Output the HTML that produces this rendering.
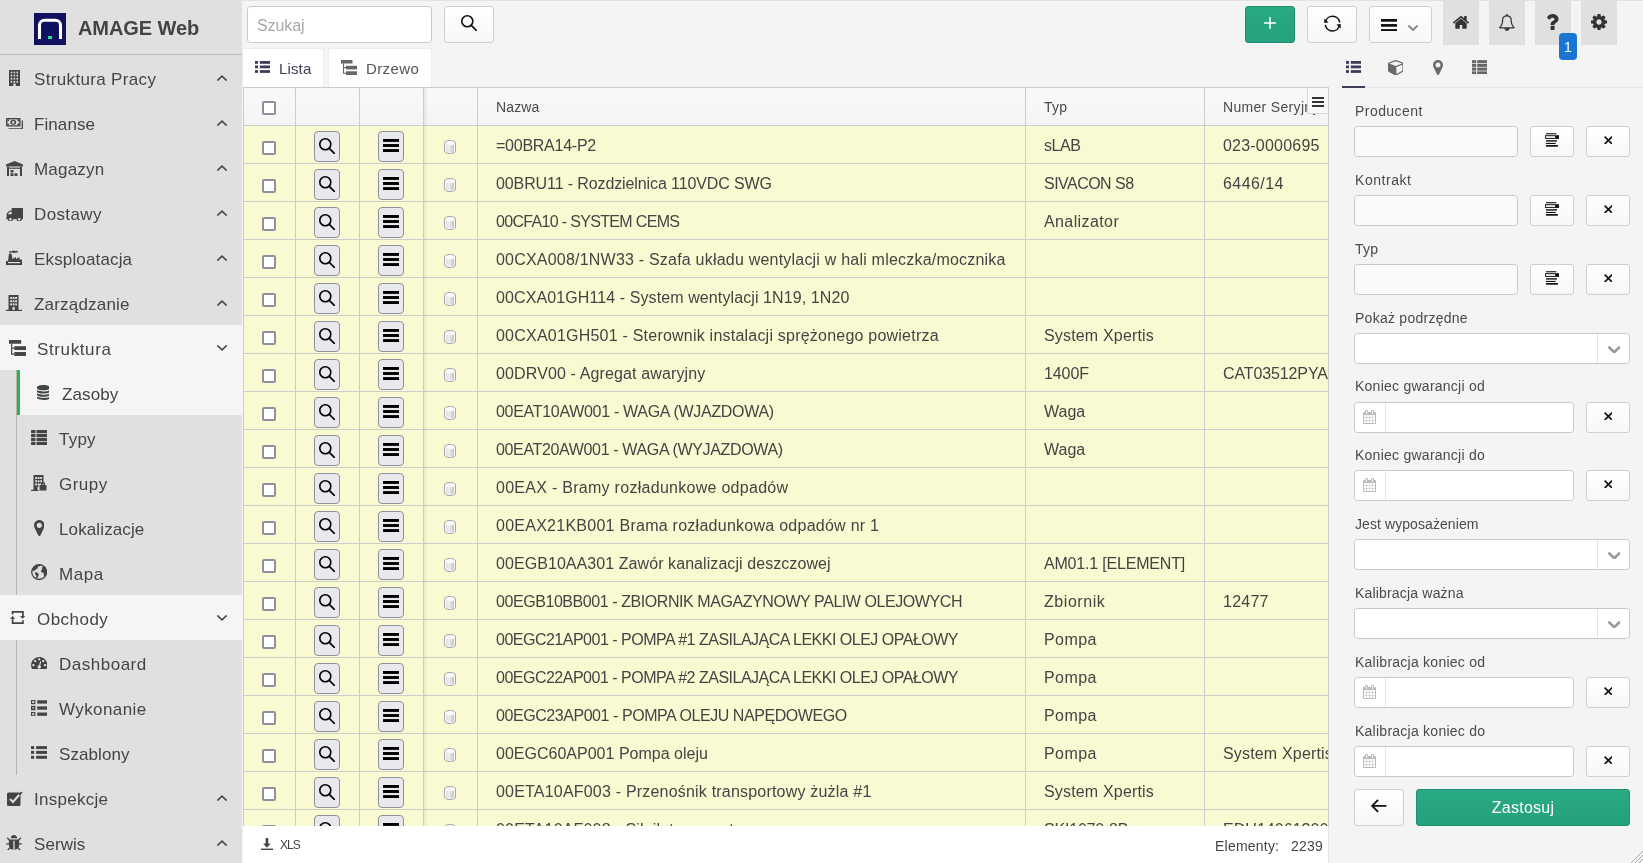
<!DOCTYPE html>
<html lang="pl"><head><meta charset="utf-8"><title>AMAGE Web</title><style>
*{box-sizing:border-box}
html,body{margin:0;padding:0}
html{background:#f4f4f4}
body{width:1643px;height:863px;overflow:hidden;will-change:transform;font-family:"Liberation Sans",sans-serif;color:#444;font-size:16px;position:relative}
.ic{display:block}
.abs{position:absolute}
#side{position:absolute;left:0;top:0;width:242px;height:863px;background:#e0e0e0}
#brand{position:absolute;left:0;top:0;width:242px;height:55px;border-bottom:1px solid #b8b8b8}
#logo{position:absolute;left:34px;top:13px;width:32px;height:32px;background:#0e1060}
#brand .t{position:absolute;left:78px;top:1.3px;height:55px;line-height:55px;font-size:20px;font-weight:700;color:#444;white-space:nowrap}
#menu{position:absolute;left:0;top:55px;width:242px}
.mi{position:relative;height:45px;width:242px}
.mi .i{position:absolute;left:4px;top:0;width:20px;height:45px;display:flex;align-items:center;justify-content:center}
.mi .l{position:absolute;left:34px;top:2px;height:45px;line-height:45px;font-size:17px;white-space:nowrap;color:#454545}
.mi .c{position:absolute;left:217px;top:19.8px}
.mi.act{background:#f5f5f5}
.mi.act .i{left:7px}
.mi.act .l{left:37px}
.sub{position:relative;margin-left:16px;border-left:1px solid #b5b5b5;width:226px}
.si{position:relative;height:45px;width:225px}
.si .i{position:absolute;left:12px;top:0;width:20px;height:45px;display:flex;align-items:center;justify-content:center}
.si .l{position:absolute;left:42px;top:2px;height:45px;line-height:45px;font-size:17px;white-space:nowrap;color:#454545}
.si.act{background:#f5f5f5;border-left:3px solid #2fb344;margin-left:0px;width:225px}
.si.act .i{left:13px}
.si.act .l{left:42px}
.btn{position:absolute;border:1px solid #cfcfcf;border-radius:3px;padding-bottom:3px;background:linear-gradient(#fff,#f7f7f7);display:flex;align-items:center;justify-content:center}
.inp{position:absolute;border:1px solid #c9c9c9;border-radius:3.5px;background:#fafafa}
.lbl{position:absolute;margin-top:1px;font-size:14px;line-height:20px;color:#4a4a4a;white-space:nowrap}
.tb{position:absolute;top:0;width:36px;height:45px;background:#e0e0e0;display:flex;align-items:center;justify-content:center}
#grid{position:absolute;left:243px;top:87px;width:1086px;height:739px;overflow:hidden;border-left:1px solid #ccc;border-right:1px solid #ccc;border-top:1px solid #ccc;background:#fafad2}
#ghead{position:absolute;left:0;top:0;width:1086px;height:38px;background:linear-gradient(#f9f9f9,#f4f4f4);border-bottom:1px solid #ccc}
.hc{position:absolute;top:1px;height:37px;line-height:37px;font-size:14px;color:#4a4a4a;white-space:nowrap;overflow:hidden}
.vl{position:absolute;top:0;width:1px;height:739px;background:#ccc}
.row{position:absolute;left:0;width:1086px;height:38px;border-bottom:1px solid #ccc}
.row .tx{position:absolute;top:1px;height:37px;line-height:37px;font-size:16px;color:#444;white-space:nowrap;overflow:hidden}
.cb{position:absolute;width:14px;height:14px;border:2px solid #8f8f9d;border-radius:2px;background:#fff}
.rb{position:absolute;top:5px;width:26px;height:31px;padding-bottom:2px;border:1px solid #8f8f9d;border-radius:4px;background:#e9e9ed;display:flex;align-items:center;justify-content:center}
#foot{position:absolute;left:243px;top:826px;width:1086px;height:37px;background:#fff;border-right:1px solid #e6e6e6}
#panel{position:absolute;left:1329px;top:87px;width:314px;height:776px}
</style></head><body>
<div id="side"><div id="brand"><div id="logo"><svg class="ic" width="32" height="32" viewBox="0 0 32 32"><path d="M5.500 26V12.300a5 5 0 0 1 5-5h11a5 5 0 0 1 5 5V26" fill="none" stroke="#fff" stroke-width="3.100"/><rect x="14" y="23" width="4" height="3" fill="#1fe0a0"/></svg></div><div class="t"><span style="letter-spacing:-0.08px">AMAGE Web</span></div></div><div id="menu"><div class="mi"><div class="i" style="padding-top:0px;padding-left:0px"><svg class="ic" width="11" height="16" viewBox="0 0 11 16"><rect x="0" y="0" width="11" height="16" fill="#444"/><g fill="#e0e0e0"><rect x="1.70" y="1.60" width="1.600" height="1.800"/><rect x="4.60" y="1.60" width="1.600" height="1.800"/><rect x="7.50" y="1.60" width="1.600" height="1.800"/><rect x="1.70" y="4.70" width="1.600" height="1.800"/><rect x="4.60" y="4.70" width="1.600" height="1.800"/><rect x="7.50" y="4.70" width="1.600" height="1.800"/><rect x="1.70" y="7.80" width="1.600" height="1.800"/><rect x="4.60" y="7.80" width="1.600" height="1.800"/><rect x="7.50" y="7.80" width="1.600" height="1.800"/><rect x="1.70" y="10.90" width="1.600" height="1.800"/><rect x="4.60" y="10.90" width="1.600" height="1.800"/><rect x="7.50" y="10.90" width="1.600" height="1.800"/><rect x="4.300" y="13.600" width="2.400" height="2.400"/></g></svg></div><div class="l"><span style="letter-spacing:0.34px">Struktura Pracy</span></div><div class="c"><svg class="ic" width="10" height="6" viewBox="0 0 10 6"><polyline points="0.3,5.6 5,1.1 9.7,5.6" fill="none" stroke="#484848" stroke-width="1.55"/></svg></div></div><div class="mi"><div class="i" style="padding-top:2px;padding-left:0px"><svg class="ic" width="17" height="11.500" viewBox="0 0 17 11.500"><rect x="0" y="0" width="14.500" height="8.600" rx=".8" fill="#444"/><rect x="1.400" y="1.400" width="11.700" height="5.800" fill="#e0e0e0"/><ellipse cx="7.250" cy="4.300" rx="2.900" ry="2.500" fill="#444"/><ellipse cx="7.250" cy="4.300" rx="1.100" ry="1.500" fill="#e0e0e0"/><path d="M1.400 1.400h2a2 2 0 0 1-2 2zM13.100 1.400h-2a2 2 0 0 0 2 2zM1.400 7.200h2a2 2 0 0 0-2-2zM13.100 7.200h-2a2 2 0 0 1 2-2z" fill="#444"/><path d="M16.300 2.500V10.800H2.500" fill="none" stroke="#444" stroke-width="1.300"/></svg></div><div class="l"><span style="letter-spacing:0.08px">Finanse</span></div><div class="c"><svg class="ic" width="10" height="6" viewBox="0 0 10 6"><polyline points="0.3,5.6 5,1.1 9.7,5.6" fill="none" stroke="#484848" stroke-width="1.55"/></svg></div></div><div class="mi"><div class="i" style="padding-top:1.0px;padding-left:0px"><svg class="ic" width="17" height="15" viewBox="0 0 17 15"><g fill="#444"><path d="M8.500 0L17 3.600V5.600H0V3.600z"/><rect x="1" y="5.600" width="2" height="9.400"/><rect x="14" y="5.600" width="2" height="9.400"/><rect x="3" y="6.600" width="11" height="1.200"/><rect x="4.500" y="9" width="3" height="2.500"/><rect x="4.500" y="12.300" width="3" height="2.700"/><rect x="8.500" y="12.300" width="3" height="2.700"/></g></svg></div><div class="l"><span style="letter-spacing:0.19px">Magazyn</span></div><div class="c"><svg class="ic" width="10" height="6" viewBox="0 0 10 6"><polyline points="0.3,5.6 5,1.1 9.7,5.6" fill="none" stroke="#484848" stroke-width="1.55"/></svg></div></div><div class="mi"><div class="i" style="padding-top:4px;padding-left:0px"><svg class="ic" width="17.00" height="13.85" viewBox="0 0 1728 1408" style=""><path fill="#444" d="M576 1152C576 1222 518 1280 448 1280C378 1280 320 1222 320 1152C320 1082 378 1024 448 1024C518 1024 576 1082 576 1152ZM192 640V610C192 606 198 591 201 588L396 393C399 390 414 384 418 384H576V640ZM1472 1152C1472 1222 1414 1280 1344 1280C1274 1280 1216 1222 1216 1152C1216 1082 1274 1024 1344 1024C1414 1024 1472 1082 1472 1152ZM1728 64C1728 29 1699 0 1664 0H640C605 0 576 29 576 64V256H416C380 256 332 276 307 301L109 499C54 554 64 633 64 704V1024C29 1024 0 1053 0 1088C0 1162 78 1152 128 1152H192C192 1293 307 1408 448 1408C589 1408 704 1293 704 1152H1088C1088 1293 1203 1408 1344 1408C1485 1408 1600 1293 1600 1152C1650 1152 1728 1162 1728 1088Z"/></svg></div><div class="l"><span style="letter-spacing:0.38px">Dostawy</span></div><div class="c"><svg class="ic" width="10" height="6" viewBox="0 0 10 6"><polyline points="0.3,5.6 5,1.1 9.7,5.6" fill="none" stroke="#484848" stroke-width="1.55"/></svg></div></div><div class="mi"><div class="i" style="padding-top:0px;padding-left:0px"><svg class="ic" width="16" height="15" viewBox="0 0 16 15"><g fill="#444"><path d="M0 15V11H2L3 3.500H5.500L6.500 9L10 7V9L13.500 7V9.500H16V15z"/><path d="M3 2.400C3 .9 4.500 .9 5.500 1.400C6.500 0 8.500 .2 9 1.200C10.500 .4 12 1 12 2.400H9.500C9 3.200 7.500 3.200 7 2.400z"/></g><rect x="2" y="12" width="12" height="1.200" fill="#e0e0e0"/></svg></div><div class="l"><span style="letter-spacing:0.15px">Eksploatacja</span></div><div class="c"><svg class="ic" width="10" height="6" viewBox="0 0 10 6"><polyline points="0.3,5.6 5,1.1 9.7,5.6" fill="none" stroke="#484848" stroke-width="1.55"/></svg></div></div><div class="mi"><div class="i" style="padding-top:0px;padding-left:0px"><svg class="ic" width="16" height="16" viewBox="0 0 16 16"><g fill="#444"><rect x="2.500" y="0" width="10" height="15"/><rect x="0" y="14.800" width="16" height="1.200"/></g><g fill="#e0e0e0"><rect x="4.200" y="2" width="1.800" height="2"/><rect x="6.700" y="2" width="1.800" height="2"/><rect x="9.200" y="2" width="1.800" height="2"/><rect x="4.200" y="5.200" width="1.800" height="2"/><rect x="6.700" y="5.200" width="1.800" height="2"/><rect x="9.200" y="5.200" width="1.800" height="2"/><rect x="4.200" y="8.400" width="1.800" height="2"/><rect x="6.700" y="8.400" width="1.800" height="2"/><rect x="9.200" y="8.400" width="1.800" height="2"/><rect x="6.500" y="12" width="2.200" height="3"/></g></svg></div><div class="l"><span style="letter-spacing:0.19px">Zarządzanie</span></div><div class="c"><svg class="ic" width="10" height="6" viewBox="0 0 10 6"><polyline points="0.3,5.6 5,1.1 9.7,5.6" fill="none" stroke="#484848" stroke-width="1.55"/></svg></div></div><div class="mi act"><div class="i" style="padding-top:0px;padding-left:0px"><svg class="ic" width="17" height="16" viewBox="0 0 16 15"><g fill="#444"><rect x="0" y="0" width="11.500" height="3.500"/><rect x="5" y="5.800" width="11" height="3.600"/><rect x="5" y="11.300" width="11" height="3.700"/></g><path d="M2.500 3.500V13.200H5M2.500 7.600H5" fill="none" stroke="#444" stroke-width="1.1"/></svg></div><div class="l"><span style="letter-spacing:0.62px">Struktura</span></div><div class="c"><svg class="ic" width="10" height="6" viewBox="0 0 10 6"><polyline points="0.3,0.4 5,4.9 9.7,0.4" fill="none" stroke="#484848" stroke-width="1.55"/></svg></div></div><div class="sub"><div class="si act"><div class="i" style="padding-top:0px;padding-left:0px"><svg class="ic" width="12.86" height="15.00" viewBox="0 0 1536 1792" style=""><path fill="#444" d="M768 768C467 768 165 714 0 598V768C0 909 344 1024 768 1024C1192 1024 1536 909 1536 768V598C1371 714 1069 768 768 768ZM768 1536C467 1536 165 1482 0 1366V1536C0 1677 344 1792 768 1792C1192 1792 1536 1677 1536 1536V1366C1371 1482 1069 1536 768 1536ZM768 1152C467 1152 165 1098 0 982V1152C0 1293 344 1408 768 1408C1192 1408 1536 1293 1536 1152V982C1371 1098 1069 1152 768 1152ZM768 0C344 0 0 115 0 256V384C0 525 344 640 768 640C1192 640 1536 525 1536 384V256C1536 115 1192 0 768 0Z"/></svg></div><div class="l"><span style="letter-spacing:0.11px">Zasoby</span></div></div><div class="si"><div class="i" style="padding-top:0px;padding-left:0px"><svg class="ic" width="16.5" height="15" viewBox="0 0 15.500 14.250"><g fill="#444"><rect x="0" y="0.00" width="4.2" height="3"/><rect x="5.200" y="0.00" width="10.300" height="3"/><rect x="0" y="3.75" width="4.2" height="3"/><rect x="5.200" y="3.75" width="10.300" height="3"/><rect x="0" y="7.50" width="4.2" height="3"/><rect x="5.200" y="7.50" width="10.300" height="3"/><rect x="0" y="11.25" width="4.2" height="3"/><rect x="5.200" y="11.25" width="10.300" height="3"/></g></svg></div><div class="l"><span style="letter-spacing:0.23px">Typy</span></div></div><div class="si"><div class="i" style="padding-top:0px;padding-left:0px"><svg class="ic" width="16" height="16" viewBox="0 0 16 16"><g fill="#444"><rect x="2.500" y="0" width="10" height="15"/><rect x="0" y="14.800" width="16" height="1.200"/></g><g fill="#e0e0e0"><rect x="4.200" y="2" width="1.800" height="2"/><rect x="6.700" y="2" width="1.800" height="2"/><rect x="9.200" y="2" width="1.800" height="2"/><rect x="4.200" y="5.200" width="1.800" height="2"/><rect x="6.700" y="5.200" width="1.800" height="2"/><rect x="9.200" y="5.200" width="1.800" height="2"/><rect x="4.200" y="8.400" width="1.800" height="2"/><rect x="6.700" y="8.400" width="1.800" height="2"/><rect x="9.200" y="8.400" width="1.800" height="2"/><rect x="6.500" y="12" width="2.200" height="3"/></g><rect x="8" y="9.500" width="8" height="6.500" fill="#444" stroke="#e0e0e0" stroke-width="1"/><rect x="10.500" y="8" width="3" height="2" fill="none" stroke="#444" stroke-width="1"/></svg></div><div class="l"><span style="letter-spacing:0.47px">Grupy</span></div></div><div class="si"><div class="i" style="padding-top:0px;padding-left:0px"><svg class="ic" width="10.67" height="16.00" viewBox="0 0 1024 1536" style=""><path fill="#444" d="M768 512C768 653 653 768 512 768C371 768 256 653 256 512C256 371 371 256 512 256C653 256 768 371 768 512ZM1024 512C1024 229 795 0 512 0C229 0 0 229 0 512C0 573 7 636 33 691L398 1465C418 1509 464 1536 512 1536C560 1536 606 1509 627 1465L991 691C1017 636 1024 573 1024 512Z"/></svg></div><div class="l"><span style="letter-spacing:0.12px">Lokalizacje</span></div></div><div class="si"><div class="i" style="padding-top:0px;padding-left:0px"><svg class="ic" width="16.200" height="16.200" viewBox="0 0 16 16"><circle cx="8" cy="8" r="7.300" fill="none" stroke="#444" stroke-width="1.300"/><g fill="#444"><path d="M1.100 6.400C1.500 3.500 3.500 1.300 6 .7L10.500 .9L8.200 2.500L7 2.200L6.600 4.100L4.500 5.600L3 7z"/><path d="M3.900 8.500L5.600 8.100L7.800 10L7.100 12.100L6 14.500L5.200 13.500L5 11L4 9.800z"/><path d="M11 3L13.500 2.100C15 4 15.900 6.500 15.300 9.500L14 12.200L12.800 11.500L12.500 8.800L10 8L9.800 6.800L11 5z"/></g></svg></div><div class="l"><span style="letter-spacing:0.52px">Mapa</span></div></div></div><div class="mi act"><div class="i" style="padding-top:0px;padding-left:0.8px"><svg class="ic" width="15.200" height="13" viewBox="0 0 15.200 13"><g fill="none" stroke="#444" stroke-width="1.700"><path d="M2.600 3.600V.85H12.950V5.200"/><path d="M12.950 9.200V12.150H2.600V7.600"/></g><path fill="#444" d="M10 5H15.200L12.600 7.800zM0 7.800H5.200L2.600 5z"/></svg></div><div class="l"><span style="letter-spacing:0.47px">Obchody</span></div><div class="c"><svg class="ic" width="10" height="6" viewBox="0 0 10 6"><polyline points="0.3,0.4 5,4.9 9.7,0.4" fill="none" stroke="#484848" stroke-width="1.55"/></svg></div></div><div class="sub"><div class="si"><div class="i" style="padding-top:1.0px;padding-left:0px"><svg class="ic" width="16.50" height="12.80" viewBox="0 0 1792 1408" style=""><path fill="#444" d="M384 896C384 967 327 1024 256 1024C185 1024 128 967 128 896C128 825 185 768 256 768C327 768 384 825 384 896ZM576 448C576 519 519 576 448 576C377 576 320 519 320 448C320 377 377 320 448 320C519 320 576 377 576 448ZM1004 929C1069 974 1103 1056 1082 1137C1055 1239 950 1301 847 1274C745 1247 683 1142 710 1039C732 958 801 903 880 897L981 515C990 481 1025 460 1059 469C1093 478 1113 513 1105 547ZM1664 896C1664 967 1607 1024 1536 1024C1465 1024 1408 967 1408 896C1408 825 1465 768 1536 768C1607 768 1664 825 1664 896ZM1024 256C1024 327 967 384 896 384C825 384 768 327 768 256C768 185 825 128 896 128C967 128 1024 185 1024 256ZM1472 448C1472 519 1415 576 1344 576C1273 576 1216 519 1216 448C1216 377 1273 320 1344 320C1415 320 1472 377 1472 448ZM1792 896C1792 402 1390 0 896 0C402 0 0 402 0 896C0 1068 49 1235 141 1379C153 1397 173 1408 195 1408H1597C1619 1408 1639 1397 1651 1379C1743 1234 1792 1068 1792 896Z"/></svg></div><div class="l"><span style="letter-spacing:0.51px">Dashboard</span></div></div><div class="si"><div class="i" style="padding-top:0px;padding-left:0px"><svg class="ic" width="16.500" height="16" viewBox="0 0 16.500 16"><rect x="6.200" y="0.3" width="10.300" height="3.300" fill="#444"/><rect x=".6" y="0.4" width="3.200" height="3.200" fill="none" stroke="#444" stroke-width="1.200"/><rect x="6.200" y="6.4" width="10.300" height="3.300" fill="#444"/><rect x=".6" y="6.5" width="3.200" height="3.200" fill="none" stroke="#444" stroke-width="1.200"/><rect x="6.200" y="12.5" width="10.300" height="3.300" fill="#444"/><rect x=".6" y="12.6" width="3.200" height="3.200" fill="none" stroke="#444" stroke-width="1.200"/><path d="M1.300 7.900L2.100 8.800L3.800 6.700" stroke="#444" stroke-width="1" fill="none"/></svg></div><div class="l"><span style="letter-spacing:0.4px">Wykonanie</span></div></div><div class="si"><div class="i" style="padding-top:0px;padding-left:0px"><svg class="ic" width="16" height="13" viewBox="0 0 15 12"><g fill="#444"><rect x="0" y="0" width="3" height="2.8"/><rect x="4.800" y="0" width="10.200" height="2.800"/><rect x="0" y="4.500" width="3" height="2.800"/><rect x="4.800" y="4.500" width="10.200" height="2.800"/><rect x="0" y="9.100" width="3" height="2.800"/><rect x="4.800" y="9.100" width="10.200" height="2.800"/></g></svg></div><div class="l"><span style="letter-spacing:0.08px">Szablony</span></div></div></div><div class="mi"><div class="i" style="padding-top:1.4px;padding-left:1.0px"><svg class="ic" width="16" height="15" viewBox="0 0 16 15"><rect x="0" y="1.500" width="13.500" height="13.500" rx="1.500" fill="#444"/><path d="M3 8L6 11L12.500 3.500" fill="none" stroke="#e0e0e0" stroke-width="2"/><path d="M11.500 3.200L14.300 .4L15.600 1.700L12.800 4.500z" fill="#444"/></svg></div><div class="l"><span style="letter-spacing:0.26px">Inspekcje</span></div><div class="c"><svg class="ic" width="10" height="6" viewBox="0 0 10 6"><polyline points="0.3,5.6 5,1.1 9.7,5.6" fill="none" stroke="#484848" stroke-width="1.55"/></svg></div></div><div class="mi"><div class="i" style="padding-top:0px;padding-left:0px"><svg class="ic" width="16.00" height="15.68" viewBox="0 0 1600 1568" style=""><path fill="#444" d="M1600 896C1600 861 1571 832 1536 832H1312C1312 704 1312 604 1312 538L1485 365C1510 340 1510 300 1485 275C1460 250 1420 250 1395 275L1222 448H378L205 275C180 250 140 250 115 275C90 300 90 340 115 365L288 538C288 604 288 704 288 832H64C29 832 0 861 0 896C0 931 29 960 64 960H288C288 1076 311 1165 346 1234L144 1461C121 1488 123 1528 149 1552C162 1563 177 1568 192 1568C210 1568 227 1561 240 1547L423 1340C423 1340 555 1472 736 1472V576H864V1472C1034 1472 1165 1352 1165 1352L1363 1549C1375 1562 1392 1568 1408 1568C1424 1568 1441 1562 1453 1549C1478 1524 1478 1484 1453 1459L1245 1250C1285 1179 1312 1085 1312 960H1536C1571 960 1600 931 1600 896ZM1120 320C1120 143 977 0 800 0C623 0 480 143 480 320H1120Z"/></svg></div><div class="l"><span style="letter-spacing:0.06px">Serwis</span></div><div class="c"><svg class="ic" width="10" height="6" viewBox="0 0 10 6"><polyline points="0.3,5.6 5,1.1 9.7,5.6" fill="none" stroke="#484848" stroke-width="1.55"/></svg></div></div></div></div>
<div class="abs" style="left:242px;top:0;width:1401px;height:1px;background:#e2e2e2"></div><div class="inp" style="left:247px;top:6px;width:185px;height:37px;background:#fff"><div style="position:absolute;left:9px;top:1px;line-height:35px;font-size:16px;color:#a9a7ac"><span style="letter-spacing:-0.1px">Szukaj</span></div></div><div class="btn" style="left:444px;top:6px;width:50px;height:37px"><svg class="ic" width="16" height="16" viewBox="0 0 16 16"><circle cx="6.3" cy="6.3" r="5.5" fill="none" stroke="#111" stroke-width="1.6"/><path d="M10.3 10.4L15.3 15.4" stroke="#111" stroke-width="1.6" stroke-linecap="round"/></svg></div><div class="btn" style="left:1245px;top:6px;width:50px;height:37px;background:linear-gradient(#2aa985,#24a17d);border-color:#1f8f6f"><svg class="ic" width="12" height="12" viewBox="0 0 12 12"><path d="M6 0V12M0 6H12" stroke="#fff" stroke-width="1.5"/></svg></div><div class="btn" style="left:1307px;top:6px;width:50px;height:37px"><svg class="ic" width="17" height="17" viewBox="-8.5 -8.5 17 17"><g fill="none" stroke="#111" stroke-width="1.6"><path d="M7.150 -1.1A7.200 7.200 0 0 0 -7 -1.6"/><path d="M-7.150 1.3A7.200 7.200 0 0 0 7 1.800"/></g><path fill="#111" d="M-8.200 -5V-.6L-3.900 -1zM8.200 5V.6L3.900 1z"/></svg></div><div class="btn" style="left:1369px;top:6px;width:63px;height:37px"><div class="abs" style="left:11px;top:11.5px"><svg class="ic" width="16" height="12.8" viewBox="0 0 16 12.8"><g fill="#111"><rect x="0" y="0" width="16" height="2.7"/><rect x="0" y="5.050000000000001" width="16" height="2.7"/><rect x="0" y="10.100000000000001" width="16" height="2.7"/></g></svg></div><div class="abs" style="left:37.5px;top:17.5px"><svg class="ic" width="10" height="6" viewBox="0 0 10 6"><polyline points="0.3,0.4 5,4.9 9.7,0.4" fill="none" stroke="#888" stroke-width="1.9"/></svg></div></div><div class="tb" style="left:1443px"><svg class="ic" width="16.00" height="12.73" viewBox="0 0 1612 1283" style=""><path fill="#333" d="M1382 739C1382 737 1382 735 1381 733L806 259L231 733C231 735 230 737 230 739V1219C230 1254 259 1283 294 1283H678V899H934V1283H1318C1353 1283 1382 1254 1382 1219ZM1605 670C1616 657 1614 636 1601 625L1382 443V35C1382 17 1368 3 1350 3H1158C1140 3 1126 17 1126 35V230L882 26C840 -9 772 -9 730 26L11 625C-2 636 -4 657 7 670L69 744C74 750 82 754 90 755C99 756 107 753 114 748L806 171L1498 748C1504 753 1511 755 1519 755C1520 755 1521 755 1522 755C1530 754 1538 750 1543 744L1605 670Z"/></svg></div><div class="tb" style="left:1489px"><svg class="ic" width="15.79" height="17.00" viewBox="0 0 1664 1792" style=""><path fill="#333" d="M848 1696C848 1705 841 1712 832 1712C735 1712 656 1633 656 1536C656 1527 663 1520 672 1520C681 1520 688 1527 688 1536C688 1615 753 1680 832 1680C841 1680 848 1687 848 1696ZM182 1408C361 1206 448 932 448 576C448 447 570 256 832 256C1094 256 1216 447 1216 576C1216 932 1303 1206 1482 1408ZM1664 1408C1516 1283 1344 1059 1344 576C1344 384 1185 174 920 135C925 123 928 110 928 96C928 43 885 0 832 0C779 0 736 43 736 96C736 110 739 123 744 135C479 174 320 384 320 576C320 1059 148 1283 0 1408C0 1478 58 1536 128 1536H576C576 1677 691 1792 832 1792C973 1792 1088 1677 1088 1536H1536C1606 1536 1664 1478 1664 1408Z"/></svg></div><div class="tb" style="left:1535px;padding-bottom:2px"><svg class="ic" width="11.55" height="16.00" viewBox="0 0 924 1280" style=""><path fill="#333" d="M608 1000C608 978 590 960 568 960H328C306 960 288 978 288 1000V1240C288 1262 306 1280 328 1280H568C590 1280 608 1262 608 1240ZM924 400C924 171 684 0 470 0C266 0 114 87 6 266C-5 284 -1 306 16 319L180 444C188 449 196 452 205 452C216 452 228 446 236 436C295 362 319 338 343 321C365 306 406 292 451 292C532 292 605 342 605 398C605 462 573 495 496 530C408 570 288 674 288 795V840C288 862 302 896 324 896H564C587 896 604 870 604 848C604 819 641 750 700 716C795 663 924 590 924 400Z"/></svg></div><div class="tb" style="left:1581px;padding-bottom:2px"><svg class="ic" width="16.00" height="16.00" viewBox="0 0 1536 1536" style=""><path fill="#333" d="M1024 768C1024 909 909 1024 768 1024C627 1024 512 909 512 768C512 627 627 512 768 512C909 512 1024 627 1024 768ZM1536 659C1536 642 1524 626 1507 623L1324 595C1314 562 1300 529 1283 497C1317 450 1354 406 1388 360C1393 353 1396 346 1396 337C1396 329 1394 321 1389 315C1347 256 1277 194 1224 145C1217 139 1208 135 1199 135C1190 135 1181 138 1175 144L1033 251C1004 236 974 224 943 214L915 30C913 13 897 0 879 0H657C639 0 625 12 621 28C605 88 599 153 592 214C561 224 530 237 501 252L363 145C355 139 346 135 337 135C303 135 168 281 144 314C139 321 135 328 135 337C135 346 139 354 145 361C182 406 218 451 252 499C236 529 223 559 213 591L27 619C12 622 0 640 0 655V877C0 894 12 910 29 913L212 940C222 974 236 1007 253 1039C219 1086 182 1130 148 1176C143 1183 140 1190 140 1199C140 1207 142 1215 147 1222C189 1280 259 1342 312 1390C319 1397 328 1401 337 1401C346 1401 355 1398 362 1392L503 1285C532 1300 562 1312 593 1322L621 1506C623 1523 639 1536 657 1536H879C897 1536 911 1524 915 1508C931 1448 937 1383 944 1322C975 1312 1006 1299 1035 1284L1173 1392C1181 1397 1190 1401 1199 1401C1233 1401 1368 1254 1392 1222C1398 1215 1401 1208 1401 1199C1401 1190 1397 1181 1391 1174C1354 1129 1318 1085 1284 1036C1300 1007 1312 977 1323 945L1508 917C1524 914 1536 896 1536 881Z"/></svg></div><div class="abs" style="left:1559px;top:33px;width:18px;height:27px;border-radius:4px;background:#1976d2;color:#fff;font-size:14px;line-height:28.500px;text-align:center">1</div><div class="abs" style="left:242px;top:48px;width:82px;height:39px;background:#fff;border-radius:3px 3px 0 0;border:1px solid #ececec;border-bottom:0"><div class="abs" style="left:12px;top:12px"><svg class="ic" width="15" height="12" viewBox="0 0 15 12"><g fill="#3f3d56"><rect x="0" y="0" width="3" height="2.8"/><rect x="4.800" y="0" width="10.200" height="2.800"/><rect x="0" y="4.500" width="3" height="2.800"/><rect x="4.800" y="4.500" width="10.200" height="2.800"/><rect x="0" y="9.100" width="3" height="2.800"/><rect x="4.800" y="9.100" width="10.200" height="2.800"/></g></svg></div><div class="abs" style="left:36px;top:0;line-height:39px;font-size:15px;color:#3f3d56"><span style="letter-spacing:0.15px">Lista</span></div></div><div class="abs" style="left:328px;top:48px;width:104px;height:39px;background:#fefefe;border-radius:3px 3px 0 0;border:1px solid #ececec;border-bottom:0"><div class="abs" style="left:12px;top:11px"><svg class="ic" width="16" height="15" viewBox="0 0 16 15"><g fill="#666"><rect x="0" y="0" width="11.500" height="3.500"/><rect x="5" y="5.800" width="11" height="3.600"/><rect x="5" y="11.300" width="11" height="3.700"/></g><path d="M2.500 3.500V13.200H5M2.500 7.600H5" fill="none" stroke="#666" stroke-width="1.1"/></svg></div><div class="abs" style="left:37px;top:0;line-height:39px;font-size:15px;color:#555"><span style="letter-spacing:0.38px">Drzewo</span></div></div>
<svg width="0" height="0" style="position:absolute"><defs><linearGradient id="cg" x1="0" x2="1" y1="0" y2="0"><stop offset="0" stop-color="#e2e2e2"/><stop offset=".4" stop-color="#ececec"/><stop offset="1" stop-color="#c4c4c4"/></linearGradient></defs></svg><div id="grid"><div id="ghead"><div class="cb" style="left:18px;top:13px"></div><div class="hc" style="left:252px"><span style="letter-spacing:0.14px">Nazwa</span></div><div class="hc" style="left:800px"><span style="letter-spacing:0.24px">Typ</span></div><div class="hc" style="left:979px;width:106px"><span style="letter-spacing:0.32px">Numer Seryjny</span></div></div><div class="row" style="top:38px"><div class="cb" style="left:18px;top:15px"></div><div class="rb" style="left:70px"><svg class="ic" width="16" height="16" viewBox="0 0 16 16"><circle cx="6.3" cy="6.3" r="5.5" fill="none" stroke="#000" stroke-width="1.6"/><path d="M10.3 10.4L15.3 15.4" stroke="#000" stroke-width="1.6" stroke-linecap="round"/></svg></div><div class="rb" style="left:134px"><svg class="ic" width="16" height="13" viewBox="0 0 16 13"><g fill="#000"><rect x="0" y="0" width="16" height="2.9"/><rect x="0" y="5.05" width="16" height="2.9"/><rect x="0" y="10.1" width="16" height="2.9"/></g></svg></div><div class="abs" style="left:200px;top:14px"><svg class="ic" width="12" height="14" viewBox="0 0 12 14"><path d="M.5 3v8c0 1.400 2.400 2.500 5.500 2.500s5.500-1.100 5.500-2.500V3C11.500 1.600 9 .5 6 .5S.5 1.600.5 3z" fill="#fbfbfb" stroke="#a6a6a6" stroke-width="1"/><path d="M2 4.300v6.400c0 .9 1.800 1.600 4 1.600s4-.7 4-1.600V4.300C9 5 7.600 5.300 6 5.300S3 5 2 4.300z" fill="url(#cg)"/></svg></div><div class="tx" style="left:252px;width:528px"><span style="letter-spacing:-0.25px">=00BRA14-P2</span></div><div class="tx" style="left:800px;width:160px"><span style="letter-spacing:-0.45px">sLAB</span></div><div class="tx" style="left:979px;width:106px"><span style="letter-spacing:0.21px">023-0000695</span></div></div><div class="row" style="top:76px"><div class="cb" style="left:18px;top:15px"></div><div class="rb" style="left:70px"><svg class="ic" width="16" height="16" viewBox="0 0 16 16"><circle cx="6.3" cy="6.3" r="5.5" fill="none" stroke="#000" stroke-width="1.6"/><path d="M10.3 10.4L15.3 15.4" stroke="#000" stroke-width="1.6" stroke-linecap="round"/></svg></div><div class="rb" style="left:134px"><svg class="ic" width="16" height="13" viewBox="0 0 16 13"><g fill="#000"><rect x="0" y="0" width="16" height="2.9"/><rect x="0" y="5.05" width="16" height="2.9"/><rect x="0" y="10.1" width="16" height="2.9"/></g></svg></div><div class="abs" style="left:200px;top:14px"><svg class="ic" width="12" height="14" viewBox="0 0 12 14"><path d="M.5 3v8c0 1.400 2.400 2.500 5.500 2.500s5.500-1.100 5.500-2.500V3C11.500 1.600 9 .5 6 .5S.5 1.600.5 3z" fill="#fbfbfb" stroke="#a6a6a6" stroke-width="1"/><path d="M2 4.300v6.400c0 .9 1.800 1.600 4 1.600s4-.7 4-1.600V4.300C9 5 7.600 5.300 6 5.300S3 5 2 4.300z" fill="url(#cg)"/></svg></div><div class="tx" style="left:252px;width:528px"><span style="letter-spacing:-0.11px">00BRU11 - Rozdzielnica 110VDC SWG</span></div><div class="tx" style="left:800px;width:160px"><span style="letter-spacing:-0.53px">SIVACON S8</span></div><div class="tx" style="left:979px;width:106px"><span style="letter-spacing:0.42px">6446/14</span></div></div><div class="row" style="top:114px"><div class="cb" style="left:18px;top:15px"></div><div class="rb" style="left:70px"><svg class="ic" width="16" height="16" viewBox="0 0 16 16"><circle cx="6.3" cy="6.3" r="5.5" fill="none" stroke="#000" stroke-width="1.6"/><path d="M10.3 10.4L15.3 15.4" stroke="#000" stroke-width="1.6" stroke-linecap="round"/></svg></div><div class="rb" style="left:134px"><svg class="ic" width="16" height="13" viewBox="0 0 16 13"><g fill="#000"><rect x="0" y="0" width="16" height="2.9"/><rect x="0" y="5.05" width="16" height="2.9"/><rect x="0" y="10.1" width="16" height="2.9"/></g></svg></div><div class="abs" style="left:200px;top:14px"><svg class="ic" width="12" height="14" viewBox="0 0 12 14"><path d="M.5 3v8c0 1.400 2.400 2.500 5.500 2.500s5.500-1.100 5.500-2.500V3C11.500 1.600 9 .5 6 .5S.5 1.600.5 3z" fill="#fbfbfb" stroke="#a6a6a6" stroke-width="1"/><path d="M2 4.300v6.400c0 .9 1.800 1.600 4 1.600s4-.7 4-1.600V4.300C9 5 7.600 5.300 6 5.300S3 5 2 4.300z" fill="url(#cg)"/></svg></div><div class="tx" style="left:252px;width:528px"><span style="letter-spacing:-0.67px">00CFA10 - SYSTEM CEMS</span></div><div class="tx" style="left:800px;width:160px"><span style="letter-spacing:0.4px">Analizator</span></div></div><div class="row" style="top:152px"><div class="cb" style="left:18px;top:15px"></div><div class="rb" style="left:70px"><svg class="ic" width="16" height="16" viewBox="0 0 16 16"><circle cx="6.3" cy="6.3" r="5.5" fill="none" stroke="#000" stroke-width="1.6"/><path d="M10.3 10.4L15.3 15.4" stroke="#000" stroke-width="1.6" stroke-linecap="round"/></svg></div><div class="rb" style="left:134px"><svg class="ic" width="16" height="13" viewBox="0 0 16 13"><g fill="#000"><rect x="0" y="0" width="16" height="2.9"/><rect x="0" y="5.05" width="16" height="2.9"/><rect x="0" y="10.1" width="16" height="2.9"/></g></svg></div><div class="abs" style="left:200px;top:14px"><svg class="ic" width="12" height="14" viewBox="0 0 12 14"><path d="M.5 3v8c0 1.400 2.400 2.500 5.500 2.500s5.500-1.100 5.500-2.500V3C11.500 1.600 9 .5 6 .5S.5 1.600.5 3z" fill="#fbfbfb" stroke="#a6a6a6" stroke-width="1"/><path d="M2 4.300v6.400c0 .9 1.800 1.600 4 1.600s4-.7 4-1.600V4.300C9 5 7.600 5.300 6 5.300S3 5 2 4.300z" fill="url(#cg)"/></svg></div><div class="tx" style="left:252px;width:528px"><span style="letter-spacing:0.21px">00CXA008/1NW33 - Szafa układu wentylacji w hali mleczka/mocznika</span></div></div><div class="row" style="top:190px"><div class="cb" style="left:18px;top:15px"></div><div class="rb" style="left:70px"><svg class="ic" width="16" height="16" viewBox="0 0 16 16"><circle cx="6.3" cy="6.3" r="5.5" fill="none" stroke="#000" stroke-width="1.6"/><path d="M10.3 10.4L15.3 15.4" stroke="#000" stroke-width="1.6" stroke-linecap="round"/></svg></div><div class="rb" style="left:134px"><svg class="ic" width="16" height="13" viewBox="0 0 16 13"><g fill="#000"><rect x="0" y="0" width="16" height="2.9"/><rect x="0" y="5.05" width="16" height="2.9"/><rect x="0" y="10.1" width="16" height="2.9"/></g></svg></div><div class="abs" style="left:200px;top:14px"><svg class="ic" width="12" height="14" viewBox="0 0 12 14"><path d="M.5 3v8c0 1.400 2.400 2.500 5.500 2.500s5.500-1.100 5.500-2.500V3C11.500 1.600 9 .5 6 .5S.5 1.600.5 3z" fill="#fbfbfb" stroke="#a6a6a6" stroke-width="1"/><path d="M2 4.300v6.400c0 .9 1.800 1.600 4 1.600s4-.7 4-1.600V4.300C9 5 7.600 5.300 6 5.300S3 5 2 4.300z" fill="url(#cg)"/></svg></div><div class="tx" style="left:252px;width:528px"><span style="letter-spacing:0.1px">00CXA01GH114 - System wentylacji 1N19, 1N20</span></div></div><div class="row" style="top:228px"><div class="cb" style="left:18px;top:15px"></div><div class="rb" style="left:70px"><svg class="ic" width="16" height="16" viewBox="0 0 16 16"><circle cx="6.3" cy="6.3" r="5.5" fill="none" stroke="#000" stroke-width="1.6"/><path d="M10.3 10.4L15.3 15.4" stroke="#000" stroke-width="1.6" stroke-linecap="round"/></svg></div><div class="rb" style="left:134px"><svg class="ic" width="16" height="13" viewBox="0 0 16 13"><g fill="#000"><rect x="0" y="0" width="16" height="2.9"/><rect x="0" y="5.05" width="16" height="2.9"/><rect x="0" y="10.1" width="16" height="2.9"/></g></svg></div><div class="abs" style="left:200px;top:14px"><svg class="ic" width="12" height="14" viewBox="0 0 12 14"><path d="M.5 3v8c0 1.400 2.400 2.500 5.500 2.500s5.500-1.100 5.500-2.500V3C11.500 1.600 9 .5 6 .5S.5 1.600.5 3z" fill="#fbfbfb" stroke="#a6a6a6" stroke-width="1"/><path d="M2 4.300v6.400c0 .9 1.800 1.600 4 1.600s4-.7 4-1.600V4.300C9 5 7.600 5.300 6 5.300S3 5 2 4.300z" fill="url(#cg)"/></svg></div><div class="tx" style="left:252px;width:528px"><span style="letter-spacing:0.22px">00CXA01GH501 - Sterownik instalacji sprężonego powietrza</span></div><div class="tx" style="left:800px;width:160px"><span style="letter-spacing:0.17px">System Xpertis</span></div></div><div class="row" style="top:266px"><div class="cb" style="left:18px;top:15px"></div><div class="rb" style="left:70px"><svg class="ic" width="16" height="16" viewBox="0 0 16 16"><circle cx="6.3" cy="6.3" r="5.5" fill="none" stroke="#000" stroke-width="1.6"/><path d="M10.3 10.4L15.3 15.4" stroke="#000" stroke-width="1.6" stroke-linecap="round"/></svg></div><div class="rb" style="left:134px"><svg class="ic" width="16" height="13" viewBox="0 0 16 13"><g fill="#000"><rect x="0" y="0" width="16" height="2.9"/><rect x="0" y="5.05" width="16" height="2.9"/><rect x="0" y="10.1" width="16" height="2.9"/></g></svg></div><div class="abs" style="left:200px;top:14px"><svg class="ic" width="12" height="14" viewBox="0 0 12 14"><path d="M.5 3v8c0 1.400 2.400 2.500 5.500 2.500s5.500-1.100 5.500-2.500V3C11.500 1.600 9 .5 6 .5S.5 1.600.5 3z" fill="#fbfbfb" stroke="#a6a6a6" stroke-width="1"/><path d="M2 4.300v6.400c0 .9 1.800 1.600 4 1.600s4-.7 4-1.600V4.300C9 5 7.600 5.300 6 5.300S3 5 2 4.300z" fill="url(#cg)"/></svg></div><div class="tx" style="left:252px;width:528px"><span style="letter-spacing:0.13px">00DRV00 - Agregat awaryjny</span></div><div class="tx" style="left:800px;width:160px"><span style="letter-spacing:-0.1px">1400F</span></div><div class="tx" style="left:979px;width:106px"><span style="letter-spacing:-0.12px">CAT03512PYAZ00462</span></div></div><div class="row" style="top:304px"><div class="cb" style="left:18px;top:15px"></div><div class="rb" style="left:70px"><svg class="ic" width="16" height="16" viewBox="0 0 16 16"><circle cx="6.3" cy="6.3" r="5.5" fill="none" stroke="#000" stroke-width="1.6"/><path d="M10.3 10.4L15.3 15.4" stroke="#000" stroke-width="1.6" stroke-linecap="round"/></svg></div><div class="rb" style="left:134px"><svg class="ic" width="16" height="13" viewBox="0 0 16 13"><g fill="#000"><rect x="0" y="0" width="16" height="2.9"/><rect x="0" y="5.05" width="16" height="2.9"/><rect x="0" y="10.1" width="16" height="2.9"/></g></svg></div><div class="abs" style="left:200px;top:14px"><svg class="ic" width="12" height="14" viewBox="0 0 12 14"><path d="M.5 3v8c0 1.400 2.400 2.500 5.500 2.500s5.500-1.100 5.500-2.500V3C11.500 1.600 9 .5 6 .5S.5 1.600.5 3z" fill="#fbfbfb" stroke="#a6a6a6" stroke-width="1"/><path d="M2 4.300v6.400c0 .9 1.800 1.600 4 1.600s4-.7 4-1.600V4.300C9 5 7.600 5.300 6 5.300S3 5 2 4.300z" fill="url(#cg)"/></svg></div><div class="tx" style="left:252px;width:528px"><span style="letter-spacing:-0.3px">00EAT10AW001 - WAGA (WJAZDOWA)</span></div><div class="tx" style="left:800px;width:160px"><span style="letter-spacing:0.01px">Waga</span></div></div><div class="row" style="top:342px"><div class="cb" style="left:18px;top:15px"></div><div class="rb" style="left:70px"><svg class="ic" width="16" height="16" viewBox="0 0 16 16"><circle cx="6.3" cy="6.3" r="5.5" fill="none" stroke="#000" stroke-width="1.6"/><path d="M10.3 10.4L15.3 15.4" stroke="#000" stroke-width="1.6" stroke-linecap="round"/></svg></div><div class="rb" style="left:134px"><svg class="ic" width="16" height="13" viewBox="0 0 16 13"><g fill="#000"><rect x="0" y="0" width="16" height="2.9"/><rect x="0" y="5.05" width="16" height="2.9"/><rect x="0" y="10.1" width="16" height="2.9"/></g></svg></div><div class="abs" style="left:200px;top:14px"><svg class="ic" width="12" height="14" viewBox="0 0 12 14"><path d="M.5 3v8c0 1.400 2.400 2.500 5.500 2.500s5.500-1.100 5.500-2.500V3C11.500 1.600 9 .5 6 .5S.5 1.600.5 3z" fill="#fbfbfb" stroke="#a6a6a6" stroke-width="1"/><path d="M2 4.300v6.400c0 .9 1.800 1.600 4 1.600s4-.7 4-1.600V4.300C9 5 7.600 5.300 6 5.300S3 5 2 4.300z" fill="url(#cg)"/></svg></div><div class="tx" style="left:252px;width:528px"><span style="letter-spacing:-0.35px">00EAT20AW001 - WAGA (WYJAZDOWA)</span></div><div class="tx" style="left:800px;width:160px"><span style="letter-spacing:0.01px">Waga</span></div></div><div class="row" style="top:380px"><div class="cb" style="left:18px;top:15px"></div><div class="rb" style="left:70px"><svg class="ic" width="16" height="16" viewBox="0 0 16 16"><circle cx="6.3" cy="6.3" r="5.5" fill="none" stroke="#000" stroke-width="1.6"/><path d="M10.3 10.4L15.3 15.4" stroke="#000" stroke-width="1.6" stroke-linecap="round"/></svg></div><div class="rb" style="left:134px"><svg class="ic" width="16" height="13" viewBox="0 0 16 13"><g fill="#000"><rect x="0" y="0" width="16" height="2.9"/><rect x="0" y="5.05" width="16" height="2.9"/><rect x="0" y="10.1" width="16" height="2.9"/></g></svg></div><div class="abs" style="left:200px;top:14px"><svg class="ic" width="12" height="14" viewBox="0 0 12 14"><path d="M.5 3v8c0 1.400 2.400 2.500 5.500 2.500s5.500-1.100 5.500-2.500V3C11.500 1.600 9 .5 6 .5S.5 1.600.5 3z" fill="#fbfbfb" stroke="#a6a6a6" stroke-width="1"/><path d="M2 4.300v6.400c0 .9 1.800 1.600 4 1.600s4-.7 4-1.600V4.300C9 5 7.600 5.300 6 5.300S3 5 2 4.300z" fill="url(#cg)"/></svg></div><div class="tx" style="left:252px;width:528px"><span style="letter-spacing:0.28px">00EAX - Bramy rozładunkowe odpadów</span></div></div><div class="row" style="top:418px"><div class="cb" style="left:18px;top:15px"></div><div class="rb" style="left:70px"><svg class="ic" width="16" height="16" viewBox="0 0 16 16"><circle cx="6.3" cy="6.3" r="5.5" fill="none" stroke="#000" stroke-width="1.6"/><path d="M10.3 10.4L15.3 15.4" stroke="#000" stroke-width="1.6" stroke-linecap="round"/></svg></div><div class="rb" style="left:134px"><svg class="ic" width="16" height="13" viewBox="0 0 16 13"><g fill="#000"><rect x="0" y="0" width="16" height="2.9"/><rect x="0" y="5.05" width="16" height="2.9"/><rect x="0" y="10.1" width="16" height="2.9"/></g></svg></div><div class="abs" style="left:200px;top:14px"><svg class="ic" width="12" height="14" viewBox="0 0 12 14"><path d="M.5 3v8c0 1.400 2.400 2.500 5.500 2.500s5.500-1.100 5.500-2.500V3C11.500 1.600 9 .5 6 .5S.5 1.600.5 3z" fill="#fbfbfb" stroke="#a6a6a6" stroke-width="1"/><path d="M2 4.300v6.400c0 .9 1.800 1.600 4 1.600s4-.7 4-1.600V4.300C9 5 7.600 5.300 6 5.300S3 5 2 4.300z" fill="url(#cg)"/></svg></div><div class="tx" style="left:252px;width:528px"><span style="letter-spacing:0.26px">00EAX21KB001 Brama rozładunkowa odpadów nr 1</span></div></div><div class="row" style="top:456px"><div class="cb" style="left:18px;top:15px"></div><div class="rb" style="left:70px"><svg class="ic" width="16" height="16" viewBox="0 0 16 16"><circle cx="6.3" cy="6.3" r="5.5" fill="none" stroke="#000" stroke-width="1.6"/><path d="M10.3 10.4L15.3 15.4" stroke="#000" stroke-width="1.6" stroke-linecap="round"/></svg></div><div class="rb" style="left:134px"><svg class="ic" width="16" height="13" viewBox="0 0 16 13"><g fill="#000"><rect x="0" y="0" width="16" height="2.9"/><rect x="0" y="5.05" width="16" height="2.9"/><rect x="0" y="10.1" width="16" height="2.9"/></g></svg></div><div class="abs" style="left:200px;top:14px"><svg class="ic" width="12" height="14" viewBox="0 0 12 14"><path d="M.5 3v8c0 1.400 2.400 2.500 5.500 2.500s5.500-1.100 5.500-2.500V3C11.500 1.600 9 .5 6 .5S.5 1.600.5 3z" fill="#fbfbfb" stroke="#a6a6a6" stroke-width="1"/><path d="M2 4.300v6.400c0 .9 1.800 1.600 4 1.600s4-.7 4-1.600V4.300C9 5 7.600 5.300 6 5.300S3 5 2 4.300z" fill="url(#cg)"/></svg></div><div class="tx" style="left:252px;width:528px"><span style="letter-spacing:0.07px">00EGB10AA301 Zawór kanalizacji deszczowej</span></div><div class="tx" style="left:800px;width:160px"><span style="letter-spacing:-0.19px">AM01.1 [ELEMENT]</span></div></div><div class="row" style="top:494px"><div class="cb" style="left:18px;top:15px"></div><div class="rb" style="left:70px"><svg class="ic" width="16" height="16" viewBox="0 0 16 16"><circle cx="6.3" cy="6.3" r="5.5" fill="none" stroke="#000" stroke-width="1.6"/><path d="M10.3 10.4L15.3 15.4" stroke="#000" stroke-width="1.6" stroke-linecap="round"/></svg></div><div class="rb" style="left:134px"><svg class="ic" width="16" height="13" viewBox="0 0 16 13"><g fill="#000"><rect x="0" y="0" width="16" height="2.9"/><rect x="0" y="5.05" width="16" height="2.9"/><rect x="0" y="10.1" width="16" height="2.9"/></g></svg></div><div class="abs" style="left:200px;top:14px"><svg class="ic" width="12" height="14" viewBox="0 0 12 14"><path d="M.5 3v8c0 1.400 2.400 2.500 5.500 2.500s5.500-1.100 5.500-2.500V3C11.500 1.600 9 .5 6 .5S.5 1.600.5 3z" fill="#fbfbfb" stroke="#a6a6a6" stroke-width="1"/><path d="M2 4.300v6.400c0 .9 1.800 1.600 4 1.600s4-.7 4-1.600V4.300C9 5 7.600 5.300 6 5.300S3 5 2 4.300z" fill="url(#cg)"/></svg></div><div class="tx" style="left:252px;width:528px"><span style="letter-spacing:-0.43px">00EGB10BB001 - ZBIORNIK MAGAZYNOWY PALIW OLEJOWYCH</span></div><div class="tx" style="left:800px;width:160px"><span style="letter-spacing:0.56px">Zbiornik</span></div><div class="tx" style="left:979px;width:106px"><span style="letter-spacing:0.25px">12477</span></div></div><div class="row" style="top:532px"><div class="cb" style="left:18px;top:15px"></div><div class="rb" style="left:70px"><svg class="ic" width="16" height="16" viewBox="0 0 16 16"><circle cx="6.3" cy="6.3" r="5.5" fill="none" stroke="#000" stroke-width="1.6"/><path d="M10.3 10.4L15.3 15.4" stroke="#000" stroke-width="1.6" stroke-linecap="round"/></svg></div><div class="rb" style="left:134px"><svg class="ic" width="16" height="13" viewBox="0 0 16 13"><g fill="#000"><rect x="0" y="0" width="16" height="2.9"/><rect x="0" y="5.05" width="16" height="2.9"/><rect x="0" y="10.1" width="16" height="2.9"/></g></svg></div><div class="abs" style="left:200px;top:14px"><svg class="ic" width="12" height="14" viewBox="0 0 12 14"><path d="M.5 3v8c0 1.400 2.400 2.500 5.500 2.500s5.500-1.100 5.500-2.500V3C11.500 1.600 9 .5 6 .5S.5 1.600.5 3z" fill="#fbfbfb" stroke="#a6a6a6" stroke-width="1"/><path d="M2 4.300v6.400c0 .9 1.800 1.600 4 1.600s4-.7 4-1.600V4.300C9 5 7.600 5.300 6 5.300S3 5 2 4.300z" fill="url(#cg)"/></svg></div><div class="tx" style="left:252px;width:528px"><span style="letter-spacing:-0.5px">00EGC21AP001 - POMPA #1 ZASILAJĄCA LEKKI OLEJ OPAŁOWY</span></div><div class="tx" style="left:800px;width:160px"><span style="letter-spacing:0.41px">Pompa</span></div></div><div class="row" style="top:570px"><div class="cb" style="left:18px;top:15px"></div><div class="rb" style="left:70px"><svg class="ic" width="16" height="16" viewBox="0 0 16 16"><circle cx="6.3" cy="6.3" r="5.5" fill="none" stroke="#000" stroke-width="1.6"/><path d="M10.3 10.4L15.3 15.4" stroke="#000" stroke-width="1.6" stroke-linecap="round"/></svg></div><div class="rb" style="left:134px"><svg class="ic" width="16" height="13" viewBox="0 0 16 13"><g fill="#000"><rect x="0" y="0" width="16" height="2.9"/><rect x="0" y="5.05" width="16" height="2.9"/><rect x="0" y="10.1" width="16" height="2.9"/></g></svg></div><div class="abs" style="left:200px;top:14px"><svg class="ic" width="12" height="14" viewBox="0 0 12 14"><path d="M.5 3v8c0 1.400 2.400 2.500 5.500 2.500s5.500-1.100 5.500-2.500V3C11.500 1.600 9 .5 6 .5S.5 1.600.5 3z" fill="#fbfbfb" stroke="#a6a6a6" stroke-width="1"/><path d="M2 4.300v6.400c0 .9 1.800 1.600 4 1.600s4-.7 4-1.600V4.300C9 5 7.600 5.300 6 5.300S3 5 2 4.300z" fill="url(#cg)"/></svg></div><div class="tx" style="left:252px;width:528px"><span style="letter-spacing:-0.5px">00EGC22AP001 - POMPA #2 ZASILAJĄCA LEKKI OLEJ OPAŁOWY</span></div><div class="tx" style="left:800px;width:160px"><span style="letter-spacing:0.41px">Pompa</span></div></div><div class="row" style="top:608px"><div class="cb" style="left:18px;top:15px"></div><div class="rb" style="left:70px"><svg class="ic" width="16" height="16" viewBox="0 0 16 16"><circle cx="6.3" cy="6.3" r="5.5" fill="none" stroke="#000" stroke-width="1.6"/><path d="M10.3 10.4L15.3 15.4" stroke="#000" stroke-width="1.6" stroke-linecap="round"/></svg></div><div class="rb" style="left:134px"><svg class="ic" width="16" height="13" viewBox="0 0 16 13"><g fill="#000"><rect x="0" y="0" width="16" height="2.9"/><rect x="0" y="5.05" width="16" height="2.9"/><rect x="0" y="10.1" width="16" height="2.9"/></g></svg></div><div class="abs" style="left:200px;top:14px"><svg class="ic" width="12" height="14" viewBox="0 0 12 14"><path d="M.5 3v8c0 1.400 2.400 2.500 5.500 2.500s5.500-1.100 5.500-2.500V3C11.500 1.600 9 .5 6 .5S.5 1.600.5 3z" fill="#fbfbfb" stroke="#a6a6a6" stroke-width="1"/><path d="M2 4.300v6.400c0 .9 1.800 1.600 4 1.600s4-.7 4-1.600V4.300C9 5 7.600 5.300 6 5.300S3 5 2 4.300z" fill="url(#cg)"/></svg></div><div class="tx" style="left:252px;width:528px"><span style="letter-spacing:-0.44px">00EGC23AP001 - POMPA OLEJU NAPĘDOWEGO</span></div><div class="tx" style="left:800px;width:160px"><span style="letter-spacing:0.41px">Pompa</span></div></div><div class="row" style="top:646px"><div class="cb" style="left:18px;top:15px"></div><div class="rb" style="left:70px"><svg class="ic" width="16" height="16" viewBox="0 0 16 16"><circle cx="6.3" cy="6.3" r="5.5" fill="none" stroke="#000" stroke-width="1.6"/><path d="M10.3 10.4L15.3 15.4" stroke="#000" stroke-width="1.6" stroke-linecap="round"/></svg></div><div class="rb" style="left:134px"><svg class="ic" width="16" height="13" viewBox="0 0 16 13"><g fill="#000"><rect x="0" y="0" width="16" height="2.9"/><rect x="0" y="5.05" width="16" height="2.9"/><rect x="0" y="10.1" width="16" height="2.9"/></g></svg></div><div class="abs" style="left:200px;top:14px"><svg class="ic" width="12" height="14" viewBox="0 0 12 14"><path d="M.5 3v8c0 1.400 2.400 2.500 5.500 2.500s5.500-1.100 5.500-2.500V3C11.500 1.600 9 .5 6 .5S.5 1.600.5 3z" fill="#fbfbfb" stroke="#a6a6a6" stroke-width="1"/><path d="M2 4.300v6.400c0 .9 1.800 1.600 4 1.600s4-.7 4-1.600V4.300C9 5 7.600 5.300 6 5.300S3 5 2 4.300z" fill="url(#cg)"/></svg></div><div class="tx" style="left:252px;width:528px"><span style="letter-spacing:0.01px">00EGC60AP001 Pompa oleju</span></div><div class="tx" style="left:800px;width:160px"><span style="letter-spacing:0.41px">Pompa</span></div><div class="tx" style="left:979px;width:106px"><span style="letter-spacing:0.17px">System Xpertis</span></div></div><div class="row" style="top:684px"><div class="cb" style="left:18px;top:15px"></div><div class="rb" style="left:70px"><svg class="ic" width="16" height="16" viewBox="0 0 16 16"><circle cx="6.3" cy="6.3" r="5.5" fill="none" stroke="#000" stroke-width="1.6"/><path d="M10.3 10.4L15.3 15.4" stroke="#000" stroke-width="1.6" stroke-linecap="round"/></svg></div><div class="rb" style="left:134px"><svg class="ic" width="16" height="13" viewBox="0 0 16 13"><g fill="#000"><rect x="0" y="0" width="16" height="2.9"/><rect x="0" y="5.05" width="16" height="2.9"/><rect x="0" y="10.1" width="16" height="2.9"/></g></svg></div><div class="abs" style="left:200px;top:14px"><svg class="ic" width="12" height="14" viewBox="0 0 12 14"><path d="M.5 3v8c0 1.400 2.400 2.500 5.500 2.500s5.500-1.100 5.500-2.500V3C11.500 1.600 9 .5 6 .5S.5 1.600.5 3z" fill="#fbfbfb" stroke="#a6a6a6" stroke-width="1"/><path d="M2 4.300v6.400c0 .9 1.800 1.600 4 1.600s4-.7 4-1.600V4.300C9 5 7.600 5.300 6 5.300S3 5 2 4.300z" fill="url(#cg)"/></svg></div><div class="tx" style="left:252px;width:528px"><span style="letter-spacing:0.2px">00ETA10AF003 - Przenośnik transportowy żużla #1</span></div><div class="tx" style="left:800px;width:160px"><span style="letter-spacing:0.17px">System Xpertis</span></div></div><div class="row" style="top:722px"><div class="cb" style="left:18px;top:15px"></div><div class="rb" style="left:70px"><svg class="ic" width="16" height="16" viewBox="0 0 16 16"><circle cx="6.3" cy="6.3" r="5.5" fill="none" stroke="#000" stroke-width="1.6"/><path d="M10.3 10.4L15.3 15.4" stroke="#000" stroke-width="1.6" stroke-linecap="round"/></svg></div><div class="rb" style="left:134px"><svg class="ic" width="16" height="13" viewBox="0 0 16 13"><g fill="#000"><rect x="0" y="0" width="16" height="2.9"/><rect x="0" y="5.05" width="16" height="2.9"/><rect x="0" y="10.1" width="16" height="2.9"/></g></svg></div><div class="abs" style="left:200px;top:14px"><svg class="ic" width="12" height="14" viewBox="0 0 12 14"><path d="M.5 3v8c0 1.400 2.400 2.500 5.500 2.500s5.500-1.100 5.500-2.500V3C11.500 1.600 9 .5 6 .5S.5 1.600.5 3z" fill="#fbfbfb" stroke="#a6a6a6" stroke-width="1"/><path d="M2 4.300v6.400c0 .9 1.800 1.600 4 1.600s4-.7 4-1.600V4.300C9 5 7.600 5.300 6 5.300S3 5 2 4.300z" fill="url(#cg)"/></svg></div><div class="tx" style="left:252px;width:528px"><span style="letter-spacing:0.17px">00ETA10AF008 - Silnik transportera</span></div><div class="tx" style="left:800px;width:160px"><span style="letter-spacing:-0.2px">SKI1070-8B</span></div><div class="tx" style="left:979px;width:106px"><span style="letter-spacing:0.04px">EDU14061200</span></div></div><div class="vl" style="left:51px"></div><div class="vl" style="left:115px"></div><div class="vl" style="left:179px"></div><div class="vl" style="left:233px"></div><div class="vl" style="left:781px"></div><div class="vl" style="left:960px"></div><div class="abs" style="left:180px;top:0;width:4px;height:739px;background:linear-gradient(90deg,rgba(0,0,0,.07),rgba(0,0,0,0))"></div><div class="abs" style="left:1063px;top:0;width:21px;height:26px;background:#f8f8f8;border-left:1px solid #d8d8d8;border-bottom:1px solid #d8d8d8;display:flex;align-items:center;justify-content:center;padding-top:3px"><svg class="ic" width="12" height="10" viewBox="0 0 12 10"><g fill="#333"><rect x="0" y="0" width="12" height="2"/><rect x="0" y="4.0" width="12" height="2"/><rect x="0" y="8.0" width="12" height="2"/></g></svg></div></div>
<div id="foot"><div class="abs" style="left:18px;top:11.5px"><svg class="ic" width="12" height="12.200" viewBox="0 0 12 12.200"><g fill="#444"><rect x="4.600" y="0" width="2.600" height="6" rx=".5"/><path d="M2.200 5.500H9.600L5.900 9.800z"/><rect x="0" y="10.600" width="12" height="1.600"/></g></svg></div><div class="abs" style="left:37px;top:1px;line-height:37px;font-size:12px;color:#444"><span style="letter-spacing:-0.97px">XLS</span></div><div class="abs" style="left:972px;top:0;line-height:40px;font-size:14px;color:#444"><span style="letter-spacing:0.22px">Elementy:</span></div><div class="abs" style="left:1048px;top:0;line-height:40px;font-size:14px;color:#444"><span style="letter-spacing:0.22px">2239</span></div></div>
<div id="panel"></div><div class="abs" style="left:1342px;top:87px;width:301px;height:1px;background:#e6e6e6"></div><div class="abs" style="left:1342px;top:86px;width:23px;height:2px;background:#3f3d56"></div><div class="abs" style="left:1346px;top:61px"><svg class="ic" width="15" height="12" viewBox="0 0 15 12"><g fill="#3f3d56"><rect x="0" y="0" width="3" height="2.8"/><rect x="4.800" y="0" width="10.200" height="2.800"/><rect x="0" y="4.500" width="3" height="2.800"/><rect x="4.800" y="4.500" width="10.200" height="2.800"/><rect x="0" y="9.100" width="3" height="2.800"/><rect x="4.800" y="9.100" width="10.200" height="2.800"/></g></svg></div><div class="abs" style="left:1387.700px;top:59.500px"><svg class="ic" width="15.60" height="15.60" viewBox="0 0 1664 1664" style=""><path fill="#6a6a6a" d="M896 1501V749L1536 516V1152ZM832 636 134 382 832 128 1530 382ZM1664 384C1664 330 1630 282 1580 264L876 8C862 3 847 0 832 0C817 0 802 3 788 8L84 264C34 282 0 330 0 384V1152C0 1199 26 1242 67 1264L771 1648C790 1659 811 1664 832 1664C853 1664 874 1659 893 1648L1597 1264C1638 1242 1664 1199 1664 1152Z"/></svg></div><div class="abs" style="left:1432.500px;top:59.700px"><svg class="ic" width="10.00" height="15.00" viewBox="0 0 1024 1536" style=""><path fill="#6a6a6a" d="M768 512C768 653 653 768 512 768C371 768 256 653 256 512C256 371 371 256 512 256C653 256 768 371 768 512ZM1024 512C1024 229 795 0 512 0C229 0 0 229 0 512C0 573 7 636 33 691L398 1465C418 1509 464 1536 512 1536C560 1536 606 1509 627 1465L991 691C1017 636 1024 573 1024 512Z"/></svg></div><div class="abs" style="left:1471.7px;top:59.7px"><svg class="ic" width="15.5" height="14.5" viewBox="0 0 15.500 14.250"><g fill="#666"><rect x="0" y="0.00" width="4.2" height="3"/><rect x="5.200" y="0.00" width="10.300" height="3"/><rect x="0" y="3.75" width="4.2" height="3"/><rect x="5.200" y="3.75" width="10.300" height="3"/><rect x="0" y="7.50" width="4.2" height="3"/><rect x="5.200" y="7.50" width="10.300" height="3"/><rect x="0" y="11.25" width="4.2" height="3"/><rect x="5.200" y="11.25" width="10.300" height="3"/></g></svg></div><div class="lbl" style="left:1355px;top:100px"><span style="letter-spacing:0.45px">Producent</span></div><div class="inp" style="left:1354px;top:126px;width:164px;height:31px"></div><div class="btn" style="left:1530px;top:126px;width:44px;height:31px"><svg class="ic" width="14" height="13.800" viewBox="0 0 14 13.800"><g fill="#111"><rect x="1" y="0" width="10.400" height="1.400" fill="#444"/><rect x="0" y="2.200" width="14" height="3.700"/><rect x="1" y="7.200" width="11" height="1.400"/><rect x="1" y="9.900" width="9.700" height="1.100"/><rect x="1" y="12" width="11.900" height="1.700"/></g><rect x=".8" y="3.200" width="9.300" height="1.700" fill="#fff"/></svg></div><div class="btn" style="left:1586px;top:126px;width:44px;height:31px"><svg class="ic" width="8.8" height="8.8" viewBox="0 0 8 8"><path d="M.6.6L7.400 7.400M7.400.6L.6 7.400" stroke="#111" stroke-width="1.5"/></svg></div><div class="lbl" style="left:1355px;top:169px"><span style="letter-spacing:0.54px">Kontrakt</span></div><div class="inp" style="left:1354px;top:195px;width:164px;height:31px"></div><div class="btn" style="left:1530px;top:195px;width:44px;height:31px"><svg class="ic" width="14" height="13.800" viewBox="0 0 14 13.800"><g fill="#111"><rect x="1" y="0" width="10.400" height="1.400" fill="#444"/><rect x="0" y="2.200" width="14" height="3.700"/><rect x="1" y="7.200" width="11" height="1.400"/><rect x="1" y="9.900" width="9.700" height="1.100"/><rect x="1" y="12" width="11.900" height="1.700"/></g><rect x=".8" y="3.200" width="9.300" height="1.700" fill="#fff"/></svg></div><div class="btn" style="left:1586px;top:195px;width:44px;height:31px"><svg class="ic" width="8.8" height="8.8" viewBox="0 0 8 8"><path d="M.6.6L7.400 7.400M7.400.6L.6 7.400" stroke="#111" stroke-width="1.5"/></svg></div><div class="lbl" style="left:1355px;top:238px"><span style="letter-spacing:0.24px">Typ</span></div><div class="inp" style="left:1354px;top:264px;width:164px;height:31px"></div><div class="btn" style="left:1530px;top:264px;width:44px;height:31px"><svg class="ic" width="14" height="13.800" viewBox="0 0 14 13.800"><g fill="#111"><rect x="1" y="0" width="10.400" height="1.400" fill="#444"/><rect x="0" y="2.200" width="14" height="3.700"/><rect x="1" y="7.200" width="11" height="1.400"/><rect x="1" y="9.900" width="9.700" height="1.100"/><rect x="1" y="12" width="11.900" height="1.700"/></g><rect x=".8" y="3.200" width="9.300" height="1.700" fill="#fff"/></svg></div><div class="btn" style="left:1586px;top:264px;width:44px;height:31px"><svg class="ic" width="8.8" height="8.8" viewBox="0 0 8 8"><path d="M.6.6L7.400 7.400M7.400.6L.6 7.400" stroke="#111" stroke-width="1.5"/></svg></div><div class="lbl" style="left:1355px;top:307px"><span style="letter-spacing:0.26px">Pokaż podrzędne</span></div><div class="inp" style="left:1354px;top:333px;width:276px;height:31px;background:#fff"><div class="abs" style="left:242px;top:0;width:1px;height:29px;background:#e4e4e4"></div><div class="abs" style="left:252.5px;top:11.5px"><svg class="ic" width="12.5" height="7.8" viewBox="0 0 10 6"><polyline points="0.3,0.4 5,4.9 9.7,0.4" fill="none" stroke="#9a9a9a" stroke-width="2.1"/></svg></div></div><div class="lbl" style="left:1355px;top:375px"><span style="letter-spacing:0.25px">Koniec gwarancji od</span></div><div class="inp" style="left:1354px;top:402px;width:220px;height:31px;background:#fff"><div class="abs" style="left:30px;top:0;width:1px;height:29px;background:#e4e4e4"></div><div class="abs" style="left:8px;top:7px"><svg class="ic" width="13.00" height="14.00" viewBox="0 0 1664 1792" style=""><path fill="#bbb" d="M128 1664V1376H416V1664ZM480 1664V1376H800V1664ZM128 1312V992H416V1312ZM480 1312V992H800V1312ZM128 928V640H416V928ZM864 1664V1376H1184V1664ZM480 928V640H800V928ZM1248 1664V1376H1536V1664ZM864 1312V992H1184V1312ZM512 448C512 465 497 480 480 480H416C399 480 384 465 384 448V160C384 143 399 128 416 128H480C497 128 512 143 512 160V448ZM1248 1312V992H1536V1312ZM864 928V640H1184V928ZM1248 928V640H1536V928ZM1280 448C1280 465 1265 480 1248 480H1184C1167 480 1152 465 1152 448V160C1152 143 1167 128 1184 128H1248C1265 128 1280 143 1280 160V448ZM1664 384C1664 314 1606 256 1536 256H1408V160C1408 72 1336 0 1248 0H1184C1096 0 1024 72 1024 160V256H640V160C640 72 568 0 480 0H416C328 0 256 72 256 160V256H128C58 256 0 314 0 384V1664C0 1734 58 1792 128 1792H1536C1606 1792 1664 1734 1664 1664Z"/></svg></div></div><div class="btn" style="left:1586px;top:402px;width:44px;height:31px"><svg class="ic" width="8.8" height="8.8" viewBox="0 0 8 8"><path d="M.6.6L7.400 7.400M7.400.6L.6 7.400" stroke="#111" stroke-width="1.5"/></svg></div><div class="lbl" style="left:1355px;top:444px"><span style="letter-spacing:0.25px">Koniec gwarancji do</span></div><div class="inp" style="left:1354px;top:470px;width:220px;height:31px;background:#fff"><div class="abs" style="left:30px;top:0;width:1px;height:29px;background:#e4e4e4"></div><div class="abs" style="left:8px;top:7px"><svg class="ic" width="13.00" height="14.00" viewBox="0 0 1664 1792" style=""><path fill="#bbb" d="M128 1664V1376H416V1664ZM480 1664V1376H800V1664ZM128 1312V992H416V1312ZM480 1312V992H800V1312ZM128 928V640H416V928ZM864 1664V1376H1184V1664ZM480 928V640H800V928ZM1248 1664V1376H1536V1664ZM864 1312V992H1184V1312ZM512 448C512 465 497 480 480 480H416C399 480 384 465 384 448V160C384 143 399 128 416 128H480C497 128 512 143 512 160V448ZM1248 1312V992H1536V1312ZM864 928V640H1184V928ZM1248 928V640H1536V928ZM1280 448C1280 465 1265 480 1248 480H1184C1167 480 1152 465 1152 448V160C1152 143 1167 128 1184 128H1248C1265 128 1280 143 1280 160V448ZM1664 384C1664 314 1606 256 1536 256H1408V160C1408 72 1336 0 1248 0H1184C1096 0 1024 72 1024 160V256H640V160C640 72 568 0 480 0H416C328 0 256 72 256 160V256H128C58 256 0 314 0 384V1664C0 1734 58 1792 128 1792H1536C1606 1792 1664 1734 1664 1664Z"/></svg></div></div><div class="btn" style="left:1586px;top:470px;width:44px;height:31px"><svg class="ic" width="8.8" height="8.8" viewBox="0 0 8 8"><path d="M.6.6L7.400 7.400M7.400.6L.6 7.400" stroke="#111" stroke-width="1.5"/></svg></div><div class="lbl" style="left:1355px;top:513px"><span style="letter-spacing:0.08px">Jest wyposażeniem</span></div><div class="inp" style="left:1354px;top:539px;width:276px;height:31px;background:#fff"><div class="abs" style="left:242px;top:0;width:1px;height:29px;background:#e4e4e4"></div><div class="abs" style="left:252.5px;top:11.5px"><svg class="ic" width="12.5" height="7.8" viewBox="0 0 10 6"><polyline points="0.3,0.4 5,4.9 9.7,0.4" fill="none" stroke="#9a9a9a" stroke-width="2.1"/></svg></div></div><div class="lbl" style="left:1355px;top:582px"><span style="letter-spacing:0.18px">Kalibracja ważna</span></div><div class="inp" style="left:1354px;top:608px;width:276px;height:31px;background:#fff"><div class="abs" style="left:242px;top:0;width:1px;height:29px;background:#e4e4e4"></div><div class="abs" style="left:252.5px;top:11.5px"><svg class="ic" width="12.5" height="7.8" viewBox="0 0 10 6"><polyline points="0.3,0.4 5,4.9 9.7,0.4" fill="none" stroke="#9a9a9a" stroke-width="2.1"/></svg></div></div><div class="lbl" style="left:1355px;top:651px"><span style="letter-spacing:0.25px">Kalibracja koniec od</span></div><div class="inp" style="left:1354px;top:677px;width:220px;height:31px;background:#fff"><div class="abs" style="left:30px;top:0;width:1px;height:29px;background:#e4e4e4"></div><div class="abs" style="left:8px;top:7px"><svg class="ic" width="13.00" height="14.00" viewBox="0 0 1664 1792" style=""><path fill="#bbb" d="M128 1664V1376H416V1664ZM480 1664V1376H800V1664ZM128 1312V992H416V1312ZM480 1312V992H800V1312ZM128 928V640H416V928ZM864 1664V1376H1184V1664ZM480 928V640H800V928ZM1248 1664V1376H1536V1664ZM864 1312V992H1184V1312ZM512 448C512 465 497 480 480 480H416C399 480 384 465 384 448V160C384 143 399 128 416 128H480C497 128 512 143 512 160V448ZM1248 1312V992H1536V1312ZM864 928V640H1184V928ZM1248 928V640H1536V928ZM1280 448C1280 465 1265 480 1248 480H1184C1167 480 1152 465 1152 448V160C1152 143 1167 128 1184 128H1248C1265 128 1280 143 1280 160V448ZM1664 384C1664 314 1606 256 1536 256H1408V160C1408 72 1336 0 1248 0H1184C1096 0 1024 72 1024 160V256H640V160C640 72 568 0 480 0H416C328 0 256 72 256 160V256H128C58 256 0 314 0 384V1664C0 1734 58 1792 128 1792H1536C1606 1792 1664 1734 1664 1664Z"/></svg></div></div><div class="btn" style="left:1586px;top:677px;width:44px;height:31px"><svg class="ic" width="8.8" height="8.8" viewBox="0 0 8 8"><path d="M.6.6L7.400 7.400M7.400.6L.6 7.400" stroke="#111" stroke-width="1.5"/></svg></div><div class="lbl" style="left:1355px;top:720px"><span style="letter-spacing:0.25px">Kalibracja koniec do</span></div><div class="inp" style="left:1354px;top:746px;width:220px;height:31px;background:#fff"><div class="abs" style="left:30px;top:0;width:1px;height:29px;background:#e4e4e4"></div><div class="abs" style="left:8px;top:7px"><svg class="ic" width="13.00" height="14.00" viewBox="0 0 1664 1792" style=""><path fill="#bbb" d="M128 1664V1376H416V1664ZM480 1664V1376H800V1664ZM128 1312V992H416V1312ZM480 1312V992H800V1312ZM128 928V640H416V928ZM864 1664V1376H1184V1664ZM480 928V640H800V928ZM1248 1664V1376H1536V1664ZM864 1312V992H1184V1312ZM512 448C512 465 497 480 480 480H416C399 480 384 465 384 448V160C384 143 399 128 416 128H480C497 128 512 143 512 160V448ZM1248 1312V992H1536V1312ZM864 928V640H1184V928ZM1248 928V640H1536V928ZM1280 448C1280 465 1265 480 1248 480H1184C1167 480 1152 465 1152 448V160C1152 143 1167 128 1184 128H1248C1265 128 1280 143 1280 160V448ZM1664 384C1664 314 1606 256 1536 256H1408V160C1408 72 1336 0 1248 0H1184C1096 0 1024 72 1024 160V256H640V160C640 72 568 0 480 0H416C328 0 256 72 256 160V256H128C58 256 0 314 0 384V1664C0 1734 58 1792 128 1792H1536C1606 1792 1664 1734 1664 1664Z"/></svg></div></div><div class="btn" style="left:1586px;top:746px;width:44px;height:31px"><svg class="ic" width="8.8" height="8.8" viewBox="0 0 8 8"><path d="M.6.6L7.400 7.400M7.400.6L.6 7.400" stroke="#111" stroke-width="1.5"/></svg></div><div class="btn" style="left:1354px;top:789px;width:50px;height:37px"><svg class="ic" width="16" height="13.700" viewBox="0 0 14 12"><path d="M13.5 6H1.200M6.200 .8L1 6L6.200 11.200" fill="none" stroke="#111" stroke-width="1.6" stroke-linejoin="miter"/></svg></div><div class="btn" style="left:1416px;top:789px;width:214px;height:37px;background:linear-gradient(#2aa985,#24a17d);border-color:#1f8f6f;color:#fff;font-size:16px;padding:1px 0 0 0"><span style="letter-spacing:0.25px">Zastosuj</span></div><svg class="abs ic" style="left:1630px;top:850px" width="13" height="13" viewBox="0 0 13 13"><path d="M13 1L1 13M13 5L5 13M13 9L9 13" stroke="#aaa" stroke-width="1"/></svg>
</body></html>
